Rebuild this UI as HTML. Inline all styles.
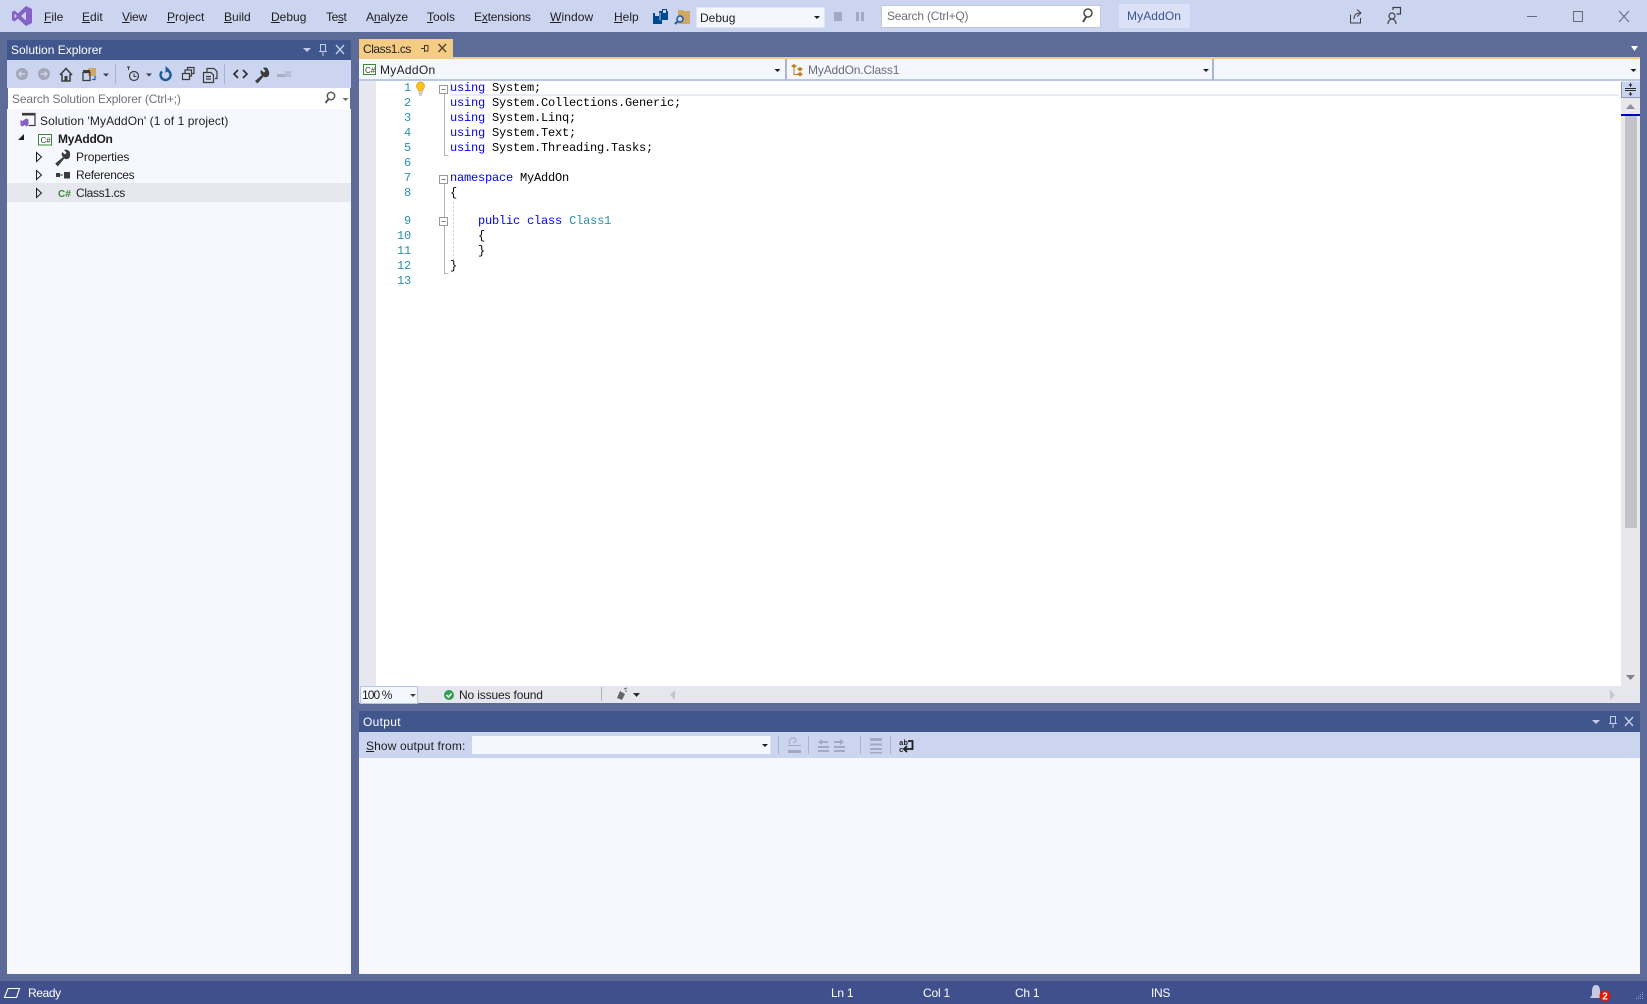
<!DOCTYPE html>
<html>
<head>
<meta charset="utf-8">
<title>MyAddOn - Visual Studio</title>
<style>
html,body{margin:0;padding:0;width:1647px;height:1004px;overflow:hidden;background:#5d6b99}
body{position:relative;font-family:"Liberation Sans",sans-serif;font-size:12px;color:#1e1e1e}
.b{position:absolute}
.t{position:absolute;white-space:nowrap;line-height:16px;font-size:12px}
.w{color:#fff}
.c{position:absolute;white-space:pre;line-height:16px;font-family:"Liberation Mono",monospace;font-size:12px;letter-spacing:-.2px;color:#000}
.k{color:#0000ff}.y{color:#2b91af}
.n{position:absolute;width:30px;text-align:right;line-height:16px;font-family:"Liberation Mono",monospace;font-size:12px;letter-spacing:-.2px;color:#2b91af;left:381px}
svg{position:absolute;left:0;top:0}
</style>
</head>
<body>
<!-- surfaces -->
<div class="b" style="left:0;top:0;width:1647px;height:32px;background:#ccd5f0"></div>
<div class="b" style="left:696px;top:7px;width:127px;height:19px;background:#f5f7fe;border:1px solid #dfe5f7"></div>
<div class="b" style="left:881px;top:5px;width:218px;height:21px;background:#fff;border:1px solid #c0c8de"></div>
<div class="b" style="left:1119px;top:4px;width:71px;height:24px;background:#dbe1f6"></div>

<!-- solution explorer -->
<div class="b" style="left:7px;top:40px;width:344px;height:20px;background:#40568d"></div>
<div class="b" style="left:7px;top:60px;width:344px;height:28px;background:#ccd5f0"></div>
<div class="b" style="left:8px;top:88px;width:342px;height:21px;background:#fff"></div>
<div class="b" style="left:7px;top:109px;width:344px;height:865px;background:#f7f8fe"></div>
<div class="b" style="left:7px;top:183px;width:344px;height:19px;background:#e6e7ef"></div>

<!-- document -->
<div class="b" style="left:359px;top:39px;width:94px;height:18px;background:#f5cc84"></div>
<div class="b" style="left:359px;top:57px;width:1281px;height:2px;background:#f5cc84"></div>
<div class="b" style="left:359px;top:59px;width:1281px;height:20px;background:#f5f7fe"></div>
<div class="b" style="left:359px;top:79px;width:1281px;height:2px;background:#bcc7e4"></div>
<div class="b" style="left:785px;top:59px;width:2px;height:21px;background:#a8b6d9"></div>
<div class="b" style="left:1212px;top:59px;width:2px;height:21px;background:#a8b6d9"></div>
<div class="b" style="left:359px;top:81px;width:1262px;height:605px;background:#fff"></div>
<div class="b" style="left:359px;top:81px;width:17px;height:605px;background:#e6e7ef"></div>
<div class="b" style="left:450px;top:81px;width:1168px;height:13px;background:#fff;border-bottom:2px solid #eaeaf2;border-left:1px solid #eaeaf2"></div>
<div class="b" style="left:1621px;top:81px;width:19px;height:605px;background:#e8e8ec"></div>
<div class="b" style="left:1621px;top:82px;width:18px;height:15px;background:#ccd5f0;border-left:1px solid #8e9bbc;border-bottom:1px solid #8e9bbc"></div>
<div class="b" style="left:1625px;top:116px;width:12px;height:412px;background:#c2c3c9"></div>
<div class="b" style="left:1621px;top:114px;width:19px;height:2px;background:#0000c0"></div>
<div class="b" style="left:359px;top:686px;width:1281px;height:17px;background:#e6e6ee"></div>
<div class="b" style="left:360px;top:686px;width:56px;height:16px;background:#f5f7fe;border:1px solid #b9c5e2"></div>

<!-- output -->
<div class="b" style="left:359px;top:711px;width:1281px;height:21px;background:#40568d"></div>
<div class="b" style="left:359px;top:732px;width:1281px;height:26px;background:#ccd5f0"></div>
<div class="b" style="left:472px;top:736px;width:298px;height:18px;background:#f5f7fe;border-right:1px solid #dfe5f7"></div>
<div class="b" style="left:359px;top:758px;width:1281px;height:216px;background:#f7f8fe"></div>

<!-- status bar -->
<div class="b" style="left:0;top:981px;width:1647px;height:23px;background:#40508c"></div>

<!-- menu -->
<span class="t" style="left:44px;top:9px"><u>F</u>ile</span>
<span class="t" style="left:82px;top:9px"><u>E</u>dit</span>
<span class="t" style="left:122px;top:9px;letter-spacing:-.2px"><u>V</u>iew</span>
<span class="t" style="left:167px;top:9px"><u>P</u>roject</span>
<span class="t" style="left:224px;top:9px"><u>B</u>uild</span>
<span class="t" style="left:271px;top:9px"><u>D</u>ebug</span>
<span class="t" style="left:326px;top:9px;letter-spacing:-.4px">Te<u>s</u>t</span>
<span class="t" style="left:366px;top:9px;letter-spacing:-.1px">A<u>n</u>alyze</span>
<span class="t" style="left:427px;top:9px"><u>T</u>ools</span>
<span class="t" style="left:474px;top:9px;letter-spacing:-.2px">E<u>x</u>tensions</span>
<span class="t" style="left:550px;top:9px;letter-spacing:.1px"><u>W</u>indow</span>
<span class="t" style="left:614px;top:9px"><u>H</u>elp</span>
<span class="t" style="left:700px;top:10px">Debug</span>
<span class="t" style="left:887px;top:8px;color:#6f6f7a;letter-spacing:-.2px">Search (Ctrl+Q)</span>
<span class="t" style="left:1127px;top:8px;color:#3b5490;letter-spacing:.1px">MyAddOn</span>

<!-- solution explorer text -->
<span class="t w" style="left:11px;top:42px">Solution Explorer</span>
<span class="t" style="left:12px;top:91px;color:#717180;letter-spacing:-.13px">Search Solution Explorer (Ctrl+;)</span>
<span class="t" style="left:40px;top:113px;letter-spacing:.09px">Solution 'MyAddOn' (1 of 1 project)</span>
<span class="t" style="left:58px;top:131px;font-weight:bold;letter-spacing:-.3px">MyAddOn</span>
<span class="t" style="left:76px;top:149px;letter-spacing:-.15px">Properties</span>
<span class="t" style="left:76px;top:167px;letter-spacing:-.3px">References</span>
<span class="t" style="left:76px;top:185px;letter-spacing:-.35px">Class1.cs</span>

<!-- tab + nav -->
<span class="t" style="left:363px;top:41px;letter-spacing:-.45px">Class1.cs</span>
<span class="t" style="left:380px;top:62px;letter-spacing:.3px">MyAddOn</span>
<span class="t" style="left:808px;top:62px;color:#6b6b78;letter-spacing:-.15px">MyAddOn.Class1</span>

<!-- code -->
<div class="n" style="top:80px">1</div><div class="n" style="top:95px">2</div><div class="n" style="top:110px">3</div><div class="n" style="top:125px">4</div><div class="n" style="top:140px">5</div><div class="n" style="top:155px">6</div><div class="n" style="top:170px">7</div><div class="n" style="top:185px">8</div><div class="n" style="top:213px">9</div><div class="n" style="top:228px">10</div><div class="n" style="top:243px">11</div><div class="n" style="top:258px">12</div><div class="n" style="top:273px">13</div>
<div class="c" style="left:450px;top:80px"><span class="k">using</span> System;</div>
<div class="c" style="left:450px;top:95px"><span class="k">using</span> System.Collections.Generic;</div>
<div class="c" style="left:450px;top:110px"><span class="k">using</span> System.Linq;</div>
<div class="c" style="left:450px;top:125px"><span class="k">using</span> System.Text;</div>
<div class="c" style="left:450px;top:140px"><span class="k">using</span> System.Threading.Tasks;</div>
<div class="c" style="left:450px;top:170px"><span class="k">namespace</span> MyAddOn</div>
<div class="c" style="left:450px;top:185px">{</div>
<div class="c" style="left:450px;top:213px">    <span class="k">public</span> <span class="k">class</span> <span class="y">Class1</span></div>
<div class="c" style="left:450px;top:228px">    {</div>
<div class="c" style="left:450px;top:243px">    }</div>
<div class="c" style="left:450px;top:258px">}</div>

<!-- editor bottom + output -->
<span class="t" style="left:362px;top:687px;letter-spacing:-.9px">100 %</span>
<span class="t" style="left:459px;top:687px;letter-spacing:-.15px">No issues found</span>
<span class="t w" style="left:363px;top:714px;letter-spacing:.3px">Output</span>
<span class="t" style="left:366px;top:738px;letter-spacing:.12px"><u>S</u>how output from:</span>

<!-- status text -->
<span class="t w" style="left:28px;top:985px;letter-spacing:-.4px">Ready</span>
<span class="t w" style="left:831px;top:985px;letter-spacing:-.25px">Ln 1</span>
<span class="t w" style="left:923px;top:985px;letter-spacing:-.2px">Col 1</span>
<span class="t w" style="left:1015px;top:985px;letter-spacing:-.25px">Ch 1</span>
<span class="t w" style="left:1151px;top:985px;letter-spacing:-.3px">INS</span>

<svg width="1647" height="1004" viewBox="0 0 1647 1004" xmlns="http://www.w3.org/2000/svg">
  <!-- VS logo -->
  <path fill="#8661c5" fill-rule="evenodd" d="M26 6 L32 9 V23 L26 26 L18 18.5 L14.5 21.500 L12 20 V12 L14.5 10.5 L18 13.5 Z M14.5 13.5 V18.5 L17 16 Z M26 11.5 L21 16 L26 20.5 Z"/>
  <!-- save all -->
  <path fill="#00488f" d="M659 11h3v-2h5v2h1v9h-6v4h-9v-11h6z"/>
  <path fill="#ccd5f0" d="M663 10h3v3h-3zM655 13h4v3h-4z"/>
  <path fill="#ccd5f0" d="M659.500 12.500h1v8h-1z" opacity=".9"/>
  <!-- open folder / find -->
  <path fill="#d0a865" d="M678 10h5l1 1h6v13h-12z"/>
  <circle cx="680" cy="19" r="3" fill="#ccd5f0" stroke="#1e5a96" stroke-width="1.500"/>
  <path d="M678 21l-3 3" stroke="#1e5a96" stroke-width="2"/>
  <!-- debug combo arrow, stop, pause -->
  <path fill="#1e1e1e" d="M814 16h6l-3 3z"/>
  <rect x="834" y="12" width="8" height="9" fill="#a3a9be"/>
  <rect x="856" y="12" width="3" height="9" fill="#a3a9be"/><rect x="861" y="12" width="3" height="9" fill="#a3a9be"/>
  <!-- search mag -->
  <circle cx="1088" cy="13" r="4" fill="none" stroke="#4a4a4a" stroke-width="1.500"/>
  <path d="M1086 17l-3 5" stroke="#4a4a4a" stroke-width="2"/>
  <!-- share -->
  <path fill="none" stroke="#404040" d="M1350.500 14.500v8.500h10v-5M1354 19c0-4 2-6 6-6M1357 9.500l4 3.500-4 3.500"/>
  <!-- person feedback -->
  <circle cx="1392" cy="16" r="3" fill="none" stroke="#404040" stroke-width="1.200"/>
  <path fill="none" stroke="#404040" stroke-width="1.200" d="M1388 24c0-3 2-5 4-5s4 2 4 5M1393 10V7.500h7.500V14h-4"/>
  <!-- window controls -->
  <path stroke="#6a6a76" d="M1527 16.500h10"/>
  <rect x="1573.500" y="11.500" width="9" height="10" fill="none" stroke="#6a6a76"/>
  <path stroke="#6a6a76" fill="none" d="M1619 11l10 11M1629 11l-10 11"/>

  <!-- SE title icons -->
  <path fill="#c3cce6" d="M303 48h8l-4 4z"/>
  <path fill="none" stroke="#c3cce6" d="M320.500 44.500h5v7h-5zM319 51.500h8M323 52v4"/>
  <path fill="none" stroke="#c3cce6" stroke-width="1.400" d="M336 45l8 9M344 45l-8 9"/>

  <!-- SE toolbar -->
  <circle cx="22" cy="74" r="6" fill="#a2a6b6"/><path stroke="#ccd5f0" stroke-width="1.400" fill="none" d="M25.500 74h-6M21.500 71.500l-2.500 2.500 2.500 2.500"/>
  <circle cx="44" cy="74" r="6" fill="#a2a6b6"/><path stroke="#ccd5f0" stroke-width="1.400" fill="none" d="M40.500 74h6M44.500 71.500l2.500 2.500-2.500 2.500"/>
  <path fill="none" stroke="#3c3c3c" stroke-width="1.500" d="M60 75l6-6.500 6 6.500M62 74v7h8v-7"/><rect x="64.500" y="76" width="3" height="5" fill="#3c3c3c"/>
  <path fill="#d0a865" d="M88 68h8v8h-8z"/><path fill="none" stroke="#3c3c3c" stroke-width="1.300" d="M83 72.500h7v8h-7zM83 72.500h7"/><path fill="#3c3c3c" d="M83 70h7v3h-7z"/><path stroke="#1e6aa8" stroke-width="1.300" fill="none" d="M95 76v3.500h-3"/>
  <path fill="#3c3c3c" d="M103 73.500h6l-3 3z"/>
  <rect x="115" y="64" width="1" height="20" fill="#a5b3d4"/>
  <circle cx="134" cy="76" r="4.500" fill="none" stroke="#3c3c3c" stroke-width="1.200"/><path fill="none" stroke="#3c3c3c" d="M134 73.500v3h2.500M127 67l3 0M128.500 67v3"/>
  <path fill="#3c3c3c" d="M146 73.500h6l-3 3z"/>
  <path fill="none" stroke="#1a5d9c" stroke-width="2.400" d="M162 71.500a5 5 0 1 0 4-1.500"/><path fill="#1a5d9c" d="M165.500 66v7l4-3.500z"/>
  <path fill="none" stroke="#3c3c3c" stroke-width="1.200" d="M182.500 73.500h7v6h-7zM185 73v-3h6.500v6h-2M187.500 70v-2.500h6.500v6h-2"/>
  <path fill="none" stroke="#3c3c3c" stroke-width="1.200" d="M207 72.500v-4h7l3 3v7h-2M203.500 72.500h7.500l2.500 2.500v7.500h-10zM206 76.500h5M206 79h5"/>
  <rect x="224" y="64" width="1" height="20" fill="#a5b3d4"/>
  <path fill="none" stroke="#2a2a2a" stroke-width="1.600" d="M238 70l-4 4 4 4M243 70l4 4-4 4"/>
  <path fill="#3c3c3c" d="M268 69c-1-1.500-3-2-5-1l2.500 3-1.500 1.500-3-2.500c-1 2-.5 4 1 5l-7 6 2.500 2.500 6-7c1.500 1 3.500 1 5-.5 1-1 1-4-.5-6.500z"/>
  <path fill="#a9aec2" d="M277 74h14v3h-14z"/><rect x="285" y="71" width="6" height="6" fill="#b9bfd2"/>

  <!-- SE search -->
  <circle cx="331" cy="96" r="3.700" fill="none" stroke="#5a5a5a" stroke-width="1.500"/><path stroke="#5a5a5a" stroke-width="2" d="M328.500 99l-3 4"/>
  <path fill="#6a6a6a" d="M342.500 98h6l-3 3z"/>

  <!-- tree: solution -->
  <path fill="none" stroke="#3c3c3c" stroke-width="1.200" d="M22 113.500h13v12h-6"/><rect x="22" y="113" width="13" height="2.500" fill="#3c3c3c"/>
  <path fill="#8661c5" d="M20.500 120l2 1 2-1.500 2-1 2 1v6l-2 1-2-1.500-2 1.500-2-1z"/>
  <!-- MyAddOn -->
  <path fill="#1e1e1e" d="M24 134v6h-6z"/>
  <rect x="38.500" y="134.500" width="13" height="10.500" fill="#fff" stroke="#388a34"/>
  <text x="40.500" y="143" font-family="Liberation Sans" font-size="8" fill="#333">C#</text>
  <!-- expanders -->
  <path fill="#f7f8fe" stroke="#1e1e1e" d="M36.500 152.500l5 4.500-5 4.500z"/>
  <path fill="#f7f8fe" stroke="#1e1e1e" d="M36.500 170.500l5 4.500-5 4.500z"/>
  <path fill="#e6e7ef" stroke="#1e1e1e" d="M36.500 188.500l5 4.500-5 4.500z"/>
  <!-- wrench -->
  <path fill="#3c3c3c" d="M69 151c-1-1-3-2-5-1l2.500 2.500-1.500 2-2.800-2.500c-1 2-.5 4 1 5l-8 6.500 2.500 3 6.500-8c1.500 1 3.700 1 5-.5 1.200-1.300 1.200-4.500.3-6.500z"/>
  <!-- references -->
  <rect x="56" y="173" width="4" height="4" fill="#3c3c3c"/><rect x="60" y="174.500" width="3" height="1" fill="#3c3c3c"/><rect x="64" y="172" width="6" height="6.500" fill="#3c3c3c"/>
  <!-- class file -->
  <text x="58" y="197" font-family="Liberation Sans" font-size="10" font-weight="bold" fill="#388a34">C#</text>

  <!-- tab icons -->
  <path fill="none" stroke="#4a3c24" d="M421 48.500h3.500M424.500 45v7M424.500 45.500h3.500v5.500h-3.500"/>
  <path fill="none" stroke="#5a4a30" stroke-width="1.500" d="M438.500 44l7.500 8M446 44l-7.500 8"/>
  <path fill="#fff" d="M1631 46h7l-3.500 5z"/>

  <!-- nav bar icons -->
  <rect x="363.500" y="64.500" width="12" height="10" fill="#fff" stroke="#388a34"/>
  <text x="365" y="72.800" font-family="Liberation Sans" font-size="8" fill="#333">C#</text>
  <path fill="#1e1e1e" d="M774.500 69h6l-3 3z"/>
  <path fill="#c27d1a" d="M791 66l3-2 3 2-3 2zM797 69l3-2 3 2-3 2.500zM797 74l3-2 3 2-3 2.500z"/><path stroke="#c27d1a" fill="none" d="M794 67v7.500h4"/>
  <path fill="#1e1e1e" d="M1203 69h6l-3 3z"/>
  <path fill="#1e1e1e" d="M1630.500 69h6l-3 3z"/>

  <!-- splitter -->
  <path stroke="#2a2a2a" d="M1625 88.500h11M1625 90.500h11M1630.500 85v2M1630.500 92v3"/>
  <path fill="#2a2a2a" d="M1628.500 85.500h4l-2-2.500zM1628.500 93.500h4l-2 2.500z"/>
  <path fill="#8a8fa3" d="M1626 109h9l-4.500-5z"/>
  <path fill="#7e8092" d="M1626 675h9l-4.500 5z"/>

  <!-- lightbulb -->
  <path fill="#f5c518" stroke="#e3a92e" d="M420.500 82a4 4 0 0 1 2.500 7l-.5 2h-4l-.5-2a4 4 0 0 1 2.500-7z"/>
  <path fill="#9a9a9a" d="M418.500 92.500h4v1h-4zM419 94.500h3v1h-3z"/>

  <!-- folding -->
  <g fill="#fff" stroke="#9a9a9a">
    <rect x="439.500" y="85.500" width="8" height="8"/>
    <rect x="439.500" y="175.500" width="8" height="8"/>
    <rect x="439.500" y="217.500" width="8" height="8"/>
  </g>
  <path stroke="#777" d="M441.500 89.500h4M441.500 179.500h4M441.500 221.500h4"/>
  <path fill="none" stroke="#b4b4b4" d="M444.500 94v61.500h4M444.500 184v33M444.500 226v47.500h4"/>
  <path stroke="#cfcfcf" stroke-dasharray="2 2" d="M453.500 202v60"/>

  <!-- editor bottom -->
  <path fill="#3c3c3c" d="M410 694h6l-3 3z"/>
  <circle cx="449" cy="695" r="5" fill="#2e9e4f"/>
  <path fill="none" stroke="#fff" stroke-width="1.500" d="M446.500 695l2 2 3-3.500"/>
  <rect x="601" y="687" width="1" height="14" fill="#b4b4bc"/>
  <path fill="#666" d="M620 691l5 3-3 6-5-2z"/><path stroke="#666" d="M624 689l3-1M625 691l2 0"/>
  <path fill="#2a2a2a" d="M633 693h7l-3.500 4z"/>
  <path fill="#c3c5d0" d="M675 690v10l-5-5z"/>
  <path fill="#c3c5d0" d="M1610 690v10l5-5z"/>

  <!-- output header -->
  <path fill="#c3cce6" d="M1592 720h8l-4 4z"/>
  <path fill="none" stroke="#c3cce6" d="M1610.500 716.500h5v7h-5zM1609 723.500h8M1613 724v4"/>
  <path fill="none" stroke="#c3cce6" stroke-width="1.400" d="M1625 717l8 9M1633 717l-8 9"/>

  <!-- output toolbar -->
  <path fill="#1e1e1e" d="M762 744h6l-3 3z"/>
  <g fill="#a5b3d4">
    <rect x="778" y="736" width="1" height="18"/><rect x="808" y="736" width="1" height="18"/>
    <rect x="860" y="736" width="1" height="18"/><rect x="890" y="736" width="1" height="18"/>
  </g>
  <g fill="#a2a9c0">
    <path d="M788 745h13v1h-13zM788 750h13v3h-13z"/>
    <path fill="none" stroke="#a2a9c0" d="M790 744c-2-3 0-6 3-6 2 0 3 1 3 3l-3 2"/>
    <path d="M818 742l4-3v2h6v2h-6v2zM818 746h11v2h-11zM818 750h11v2h-11z"/>
    <path d="M844 742l-4-3v2h-6v2h6v2zM834 746h11v2h-11zM834 750h11v2h-11z"/>
    <path d="M870 738h12v3h-12zM870 743.500h12v2h-12zM870 748h12v2h-12zM870 752h12v1.500h-12z"/>
  </g>
  <text x="899" y="745" font-family="Liberation Mono" font-size="7.500" font-weight="bold" fill="#1e1e1e">ab</text>
  <text x="899" y="752" font-family="Liberation Mono" font-size="7.500" font-weight="bold" fill="#1e1e1e">c</text>
  <path fill="none" stroke="#1e1e1e" stroke-width="1.800" d="M908 741h4.500v8h-7M907 746l-3 3 3 3"/>

  <!-- status -->
  <path fill="none" stroke="#fff" stroke-width="1.100" d="M8 988.500h11.500l-3 9h-12z"/>
  <path fill="#c4cbe0" d="M1596 985c3 0 4 3 4 6v4l2 3h-12l2-3v-4c0-3 1-6 4-6z"/>
  <circle cx="1605" cy="996" r="5.500" fill="#e51400"/>
  <text x="1605" y="999.500" text-anchor="middle" font-family="Liberation Sans" font-size="10" font-weight="bold" fill="#fff">2</text>
  <g fill="#8f9ac0"><rect x="1642" y="992" width="1" height="1"/><rect x="1640" y="994" width="1" height="1"/><rect x="1642" y="994" width="1" height="1"/><rect x="1638" y="996" width="1" height="1"/><rect x="1640" y="996" width="1" height="1"/><rect x="1642" y="996" width="1" height="1"/><rect x="1636" y="998" width="1" height="1"/><rect x="1638" y="998" width="1" height="1"/><rect x="1640" y="998" width="1" height="1"/><rect x="1642" y="998" width="1" height="1"/></g>
</svg>
</body>
</html>
